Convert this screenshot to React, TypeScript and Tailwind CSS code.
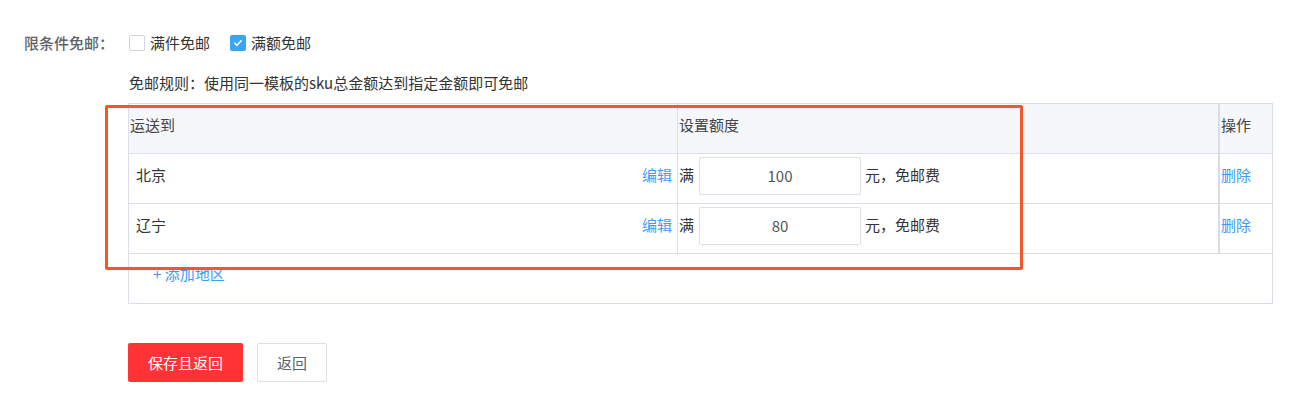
import React from "react";

const font = { fontFamily: '"Noto Sans CJK SC", "Noto Sans", sans-serif' };

function Checkbox({ checked }: { checked?: boolean }) {
  return checked ? (
    <span className="w-4 h-4 rounded-[2px] bg-[#3aa6f3] flex items-center justify-center">
      <svg width="10" height="10" viewBox="0 0 10 10">
        <path d="M1.8 5.2 L4 7.3 L8.2 2.8" stroke="#fff" strokeWidth="1.6" fill="none" strokeLinecap="round" strokeLinejoin="round" />
      </svg>
    </span>
  ) : (
    <span className="w-4 h-4 rounded-[2px] border border-[#d0d4dc] bg-white" />
  );
}

function Row({ name, value }: { name: string; value: string }) {
  return (
    <div className="flex h-[50px] border-b border-[#dadee6]">
      <div className="w-[549px] border-r border-[#dadee6] flex items-center justify-between pl-[7px] pr-[5px] pb-[7px]">
        <span className="text-[#333]">{name}</span>
        <span className="text-[#3d9bf5]">编辑</span>
      </div>
      <div className="w-[542px] border-r-2 border-[#d8dce5] flex items-center pl-[1px] pb-[6px]">
        <span className="text-[#333] -mt-[2px]">满</span>
        <div className="ml-[5px] w-[162px] h-[38px] border border-[#dcdfe6] rounded-[2px] flex items-center justify-center text-[15px] text-[#555]">
          {value}
        </div>
        <span className="ml-[4px] text-[#333] -mt-[2px]">元，免邮费</span>
      </div>
      <div className="flex-1 flex items-center pl-[1px] pb-[7px]">
        <span className="text-[#3d9bf5]">删除</span>
      </div>
    </div>
  );
}

export default function App() {
  return (
    <div className="relative w-[1291px] h-[420px] bg-white text-[15px] leading-5" style={font}>
      <div className="pt-[33px] pl-6">
        <div className="flex items-center h-5">
          <div className="w-[105px] text-[#5f6368] font-medium">限条件免邮：</div>
          <div className="flex items-center gap-[5px]">
            <Checkbox />
            <span className="text-[#333]">满件免邮</span>
          </div>
          <div className="flex items-center gap-[5px] ml-[20px]">
            <Checkbox checked />
            <span className="text-[#333]">满额免邮</span>
          </div>
        </div>
        <div className="ml-[104px]">
          <div className="mt-[20px] pl-[1px] text-[#333]">免邮规则：使用同一模板的sku总金额达到指定金额即可免邮</div>
          <div className="mt-[10px] w-[1145px] border border-[#dadee6]">
            <div className="flex h-[50px] border-b border-[#dadee6] bg-[#f5f7fa] text-[#444]">
              <div className="w-[549px] border-r border-[#dadee6] flex items-center pl-[1px] pb-[8px]">运送到</div>
              <div className="w-[542px] border-r-2 border-[#d8dce5] flex items-center pl-[1px] pb-[8px]">设置额度</div>
              <div className="flex-1 flex items-center pl-[1px] pb-[8px]">操作</div>
            </div>
            <Row name="北京" value="100" />
            <Row name="辽宁" value="80" />
            <div className="flex h-[49px] items-center pl-[24px] pb-[9px] text-[#3d9bf5]">
              <span>+ 添加地区</span>
            </div>
          </div>
          <div className="mt-[39px] flex items-center gap-[14px]">
            <button className="w-[115px] h-[39px] rounded-[2px] bg-[#ff3336] text-white text-[15px]">保存且返回</button>
            <button className="w-[70px] h-[39px] rounded-[2px] border border-[#dcdfe6] bg-white text-[#5f6368] text-[15px]">返回</button>
          </div>
        </div>
      </div>
      <div className="absolute left-[105px] top-[105px] w-[918px] h-[165px] border-[3px] border-[#f2572a] rounded-[2px] pointer-events-none" />
    </div>
  );
}
